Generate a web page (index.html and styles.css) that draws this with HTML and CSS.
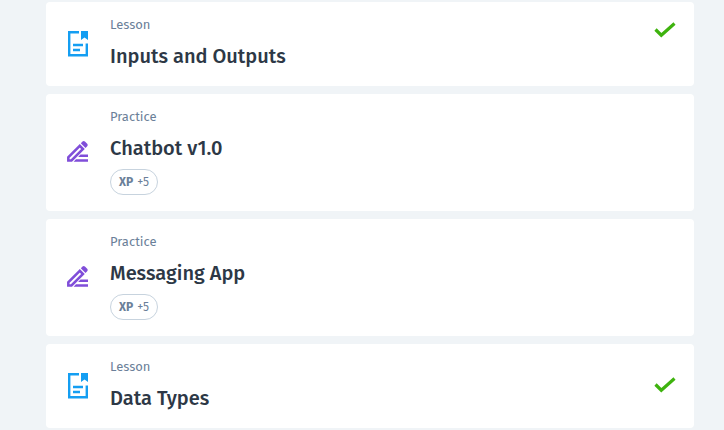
FILE: index.html
```html
<!DOCTYPE html>
<html lang="en">
<head>
<meta charset="utf-8">
<meta name="viewport" content="width=device-width, initial-scale=1">
<title>Course lessons</title>
<link rel="stylesheet" href="styles.css">
</head>
<body>
<svg class="sprite" aria-hidden="true">
  <symbol id="lesson" viewBox="0 0 24 28">
    <path d="M13 3.200H3.200V26.300h17.600V14.500" fill="none" stroke="currentColor" stroke-width="2.400"/>
    <path d="M15 2h7v9l-3.500-2.500L15 11z" fill="currentColor"/>
    <path d="M7 16h10M7 21h7" fill="none" stroke="currentColor" stroke-width="2.400"/>
  </symbol>
  <symbol id="practice" viewBox="0 0 24 28">
    <path d="M2.300 22.500v-3.200L13.800 7.800l3.200 3.200L5.500 22.500z" fill="none" stroke="currentColor" stroke-width="2.500"/>
    <path d="M14.800 5.200l1.700-1.700q1.200-1.200 2.400 0l2.300 2.300q1.200 1.200 0 2.400l-1.700 1.700z" fill="currentColor"/>
    <path d="M14.500 16.500H22v2.400h-9.900zM10 21.300h12v2.400H7.600z" fill="currentColor"/>
  </symbol>
  <symbol id="done" viewBox="0 0 22 16">
    <path d="M1.500 7.500l5.800 5.700L20.500 1.500" fill="none" stroke="currentColor" stroke-width="3.200"/>
  </symbol>
</svg>
<main>
  <ul class="steps">
    <li class="card">
      <svg class="icon lesson" aria-hidden="true"><use href="#lesson"/></svg>
      <div class="body">
        <p class="kind">Lesson</p>
        <h2 class="title">Inputs and Outputs</h2>
      </div>
      <svg class="done done-top" role="img" aria-label="Completed"><use href="#done"/></svg>
    </li>
    <li class="card">
      <svg class="icon practice" aria-hidden="true"><use href="#practice"/></svg>
      <div class="body">
        <p class="kind">Practice</p>
        <h2 class="title">Chatbot v1.0</h2>
        <span class="xp"><b>XP</b> +5</span>
      </div>
    </li>
    <li class="card">
      <svg class="icon practice" aria-hidden="true"><use href="#practice"/></svg>
      <div class="body">
        <p class="kind">Practice</p>
        <h2 class="title">Messaging App</h2>
        <span class="xp"><b>XP</b> +5</span>
      </div>
    </li>
    <li class="card">
      <svg class="icon lesson" aria-hidden="true"><use href="#lesson"/></svg>
      <div class="body">
        <p class="kind">Lesson</p>
        <h2 class="title">Data Types</h2>
      </div>
      <svg class="done" role="img" aria-label="Completed"><use href="#done"/></svg>
    </li>
  </ul>
</main>
</body>
</html>
```

FILE: styles.css
```css
* {
  box-sizing: border-box;
}

body {
  margin: 0;
  background: #f0f4f7;
  color: #2d3846;
  font-family: "Fira Sans", Roboto, "Noto Sans", sans-serif;
}

.sprite {
  display: none;
}

.steps {
  display: flex;
  flex-direction: column;
  gap: 8px;
  margin: 0;
  padding: 2px 30px 2px 46px;
  list-style: none;
}

.card {
  display: flex;
  align-items: center;
  padding: 14px 18px 16px 20px;
  border-radius: 4px;
  background: #fff;
}

.icon {
  flex: none;
  width: 24px;
  height: 28px;
  margin-right: 20px;
}

.lesson {
  color: #149ef2;
}

.practice {
  color: #804ed9;
}

.body {
  flex: 1;
}

.kind {
  margin: 0 0 8px;
  color: #6b7f99;
  font-size: 13px;
  line-height: 18px;
}

.title {
  margin: 0;
  font-size: 20px;
  font-weight: 500;
  line-height: 28px;
}

.xp {
  display: flex;
  gap: 4px;
  width: fit-content;
  margin-top: 7px;
  padding: 0 8px;
  border: 1px solid #c7d3de;
  border-radius: 13px;
  color: #6b7f99;
  font-size: 12px;
  line-height: 24px;
}

.done {
  flex: none;
  width: 22px;
  height: 16px;
  color: #3eb30e;
}

.done-top {
  align-self: flex-start;
  margin-top: 6px;
}
```
